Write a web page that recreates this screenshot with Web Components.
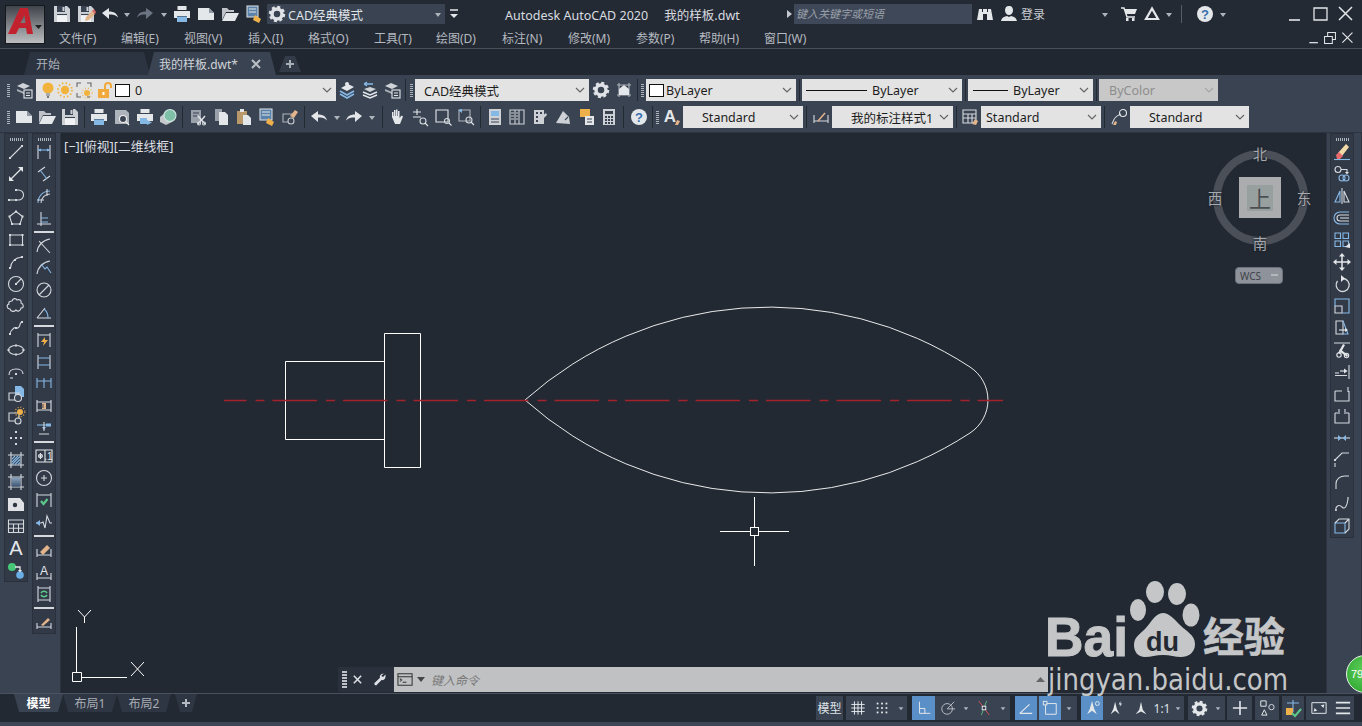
<!DOCTYPE html>
<html lang="zh">
<head>
<meta charset="utf-8">
<title>Autodesk AutoCAD 2020</title>
<style>
html, body { margin: 0; height: 726px; overflow: hidden; background: #232932; }
body { font: 12px "Noto Sans", "Noto Sans CJK SC", sans-serif; color: #d8dce0; }
</style>
</head>
<body>
<cad-app>
  <title-bar></title-bar>
  <doc-tabs></doc-tabs>
  <tool-strip>
    <tool-row>
      <tool-handle></tool-handle>
      <cad-btn n="laystate" w="24"></cad-btn>
      <cad-combo w="300" pad="3">
        <cad-btn n="bulb" w="18"></cad-btn><cad-btn n="sun" w="16"></cad-btn><cad-btn n="freeze" w="22"></cad-btn><cad-btn n="lock" w="20"></cad-btn>
        <color-swatch></color-swatch><cad-label left="5">0</cad-label>
      </cad-combo>
      <cad-btn n="layers" w="22"></cad-btn><cad-btn n="layprev" w="23"></cad-btn><cad-btn n="laystate" w="22"></cad-btn>
      <tool-sep w="4"></tool-sep><tool-handle w="8"></tool-handle>
      <cad-combo w="174" pad="9">CAD经典模式</cad-combo>
      <cad-btn n="gear" w="23"></cad-btn><cad-btn n="vp" w="23"></cad-btn>
      <tool-sep w="4"></tool-sep><tool-handle w="7"></tool-handle>
      <cad-combo w="150" pad="3"><color-swatch></color-swatch><cad-label left="2">ByLayer</cad-label></cad-combo>
      <tool-sep></tool-sep>
      <cad-combo w="160" pad="4"><line-sample w="61"></line-sample><cad-label left="5">ByLayer</cad-label></cad-combo>
      <tool-sep></tool-sep>
      <cad-combo w="125" pad="5"><line-sample w="35"></line-sample><cad-label left="5">ByLayer</cad-label></cad-combo>
      <tool-sep></tool-sep>
      <cad-combo w="119" pad="10" off>ByColor</cad-combo>
    </tool-row>
    <tool-row>
      <tool-handle></tool-handle>
      <cad-btn n="new"></cad-btn><cad-btn n="open"></cad-btn><cad-btn n="save"></cad-btn><tool-sep></tool-sep>
      <cad-btn n="print"></cad-btn><cad-btn n="preview"></cad-btn><cad-btn n="publish"></cad-btn><cad-btn n="globe"></cad-btn><tool-sep w="7"></tool-sep>
      <cad-btn n="cut"></cad-btn><cad-btn n="copyclip"></cad-btn><cad-btn n="paste"></cad-btn><cad-btn n="match"></cad-btn><cad-btn n="brush"></cad-btn><tool-sep></tool-sep>
      <cad-btn n="undo" w="24"></cad-btn><cad-btn n="down" w="12"></cad-btn><cad-btn n="redo" w="22"></cad-btn><cad-btn n="down" w="14"></cad-btn><tool-sep></tool-sep>
      <cad-btn n="hand"></cad-btn><cad-btn n="zoomrt"></cad-btn><cad-btn n="zoomwin"></cad-btn><cad-btn n="zoomprev"></cad-btn><tool-sep></tool-sep>
      <cad-btn n="props"></cad-btn><cad-btn n="design" w="22"></cad-btn><cad-btn n="palette"></cad-btn><cad-btn n="sheet"></cad-btn><cad-btn n="markup"></cad-btn><cad-btn n="calc"></cad-btn><tool-sep w="7"></tool-sep>
      <cad-btn n="help"></cad-btn><tool-sep w="5"></tool-sep><tool-handle w="5"></tool-handle>
      <cad-btn n="textstyle"></cad-btn><cad-combo w="120" pad="19">Standard</cad-combo><tool-sep></tool-sep>
      <cad-btn n="dimstyle"></cad-btn><cad-combo w="121" pad="19">我的标注样式1</cad-combo><tool-sep></tool-sep>
      <cad-btn n="tablestyle" w="22"></cad-btn><cad-combo w="120" pad="5">Standard</cad-combo><tool-sep></tool-sep>
      <cad-btn n="mleader"></cad-btn><cad-combo w="119" pad="19">Standard</cad-combo>
    </tool-row>
  </tool-strip>
  <cad-main>
    <side-dock side="left">
      <side-bar items="line ray pline polygon rect arc circle cloud spline ellipse ellarc insert mkblock point hatch gradient region table mtext addsel"></side-bar>
      <side-bar items="dimlin dimali dimarc dimord | dimrad dimjog dimdia dimang | dimquick dimbase dimcont dimspace dimbreak | tol center inspect jog | dimedit dimtedit dimupd | dimstyleic"></side-bar>
    </side-dock>
    <draw-canvas></draw-canvas>
    <side-dock side="right">
      <side-bar items="erase copy mirror offset array move rotate scale stretch trim extend break breakpt join chamfer fillet blend explode"></side-bar>
    </side-dock>
  </cad-main>
  <bottom-bar></bottom-bar>
</cad-app>
<baidu-mark></baidu-mark>

<script>
const W = '#e4e7ea', G = '#d5d9de', B = '#86b8e6', DK = '#3a4352', Y = '#eeb04a', T = '#e2b48c';
const P = (d, c = W) => `<path d="${d}" fill="${c}" stroke="none"/>`;
const L = (d, c = G, w) => `<path d="${d}" stroke="${c}"${w ? ` stroke-width="${w}"` : ''}/>`;
const D = (...xy) => { let s = ''; for (let i = 0; i < xy.length; i += 2) s += `<rect x="${xy[i] - 1}" y="${xy[i + 1] - 1}" width="2" height="2" fill="${G}" stroke="none"/>`; return s; };
const pencil = P('M8 16l1-4 6-6 3 3-6 6z', T) + P('M15 6l2-2 2 3-1 2z', '#d66');
const floppy = P('M1 1h13l3 3v13H1z', '#cdd1d6') + P('M4 1h8v6H4z', DK) + P('M9.500 2h2v4h-2z', '#cdd1d6') + P('M4 10h10v7H4z', '#f1f2f3') + L('M4 9.500h10', DK);

// icon shapes, drawn on an 18x18 grid
const ICONS = {
  save: floppy,
  saveas: floppy + pencil,
  undo: P('M1 8l7-5v3.500c5 0 8 2 9 6-2-2.500-5-3-9-3V14z'),
  redo: P('M17 8l-7-5v3.500c-5 0-8 2-9 6 2-2.500 5-3 9-3V14z'),
  redodim: P('M17 8l-7-5v3.500c-5 0-8 2-9 6 2-2.500 5-3 9-3V14z', '#6b7483'),
  down: P('M6 8h6l-3 4z', '#aeb4bc'),
  arrowr: P('M6 5l5 4-5 4z', '#c4c8ce'),
  wmin: L('M3 15h11', W, 1.600),
  wmax: L('M3 3h13v12H3z', W, 1.300),
  wclose: L('M3 2l13 13M16 2L3 15', W, 1.500),
  wrest: L('M2 7h10v9H2zM6 7V2h10v9h-4', W, 1.300),
  print: P('M4.500 1h9v4h-9zM1 6h16v7h-3v-2H4v2H1z') + P('M4 11.500h10V17H4z', B),
  new: P('M1 3h11l5 5v7H1z') + P('M12 3l5 5h-5z', '#8f97a3'),
  open: P('M1 3h5l2 2h5v2H5l-4 8z', '#bfc3c9') + P('M5 8h13l-4 8H1z'),
  plot: `<rect x="2" y="1" width="11" height="11" stroke="${G}" fill="#5a82ab"/>` + L('M4 4h7M4 7h7', W) + P('M8 15l2-5 6 4-2 4z', Y),
  gear: `<circle cx="9" cy="9" r="5" stroke="#dfe2e6" stroke-width="3.500" fill="none"/><circle cx="9" cy="9" r="7" stroke="#dfe2e6" stroke-width="2.500" stroke-dasharray="3 2.500" fill="none"/>`,
  more: L('M5 5h8', W, 1.500) + P('M5 9h8l-4 4z'),
  bin: P('M3 4h3v3h1V4h4v3h1V4h3l2 11h-6V9H7v6H1z'),
  user: P('M9 1c3 0 4 2 4 4.500S11 10 9 10 5 8 5 5.500 6 1 9 1zM1 16c1-4 4-4.500 6-5l2 1 2-1c2 .500 5 1 6 5z'),
  cart: L('M1 3h3l3 9h8', W, 1.500) + P('M4.500 4H17l-2 5H6z') + P('M6 13h2.500v3H6zM12 13h2.500v3H12z'),
  tri: L('M9 3.500L3 14h12z', W, 2.200),
  help: `<circle cx="9" cy="9" r="8" fill="${W}" stroke="none"/><text x="9" y="13.500" text-anchor="middle" font-size="13" font-weight="700" fill="#3a6fb0" stroke="none" font-family="Liberation Sans">?</text>`,
  laystate: P('M2 5l6-3 7 3-6 3z', '#cfd3d8') + P('M2 8l7 3 2-1v2l-2 1-7-3z', '#aab0b8') + `<rect x="9" y="9" width="8" height="8" fill="${DK}" stroke="${W}"/>` + L('M11 12h4M11 14.500h4', W),
  bulb: `<circle cx="9" cy="7" r="5.500" fill="#f2b33d" stroke="none"/>` + P('M7 12h4v3H7z', '#aaa') + P('M8 15h2v2H8z', '#777'),
  sun: `<circle cx="9" cy="9" r="4.200" fill="#f2b33d" stroke="none"/><circle cx="9" cy="9" r="7" fill="none" stroke="#f2b33d" stroke-width="1.800" stroke-dasharray="1.500 2.200"/>`,
  freeze: L('M2 6V2h4M12 2h4v4M2 12v4h4', '#666') + L('M12 16h3', '#666') + `<circle cx="12" cy="12" r="3" fill="#f2b33d" stroke="none"/><circle cx="12" cy="12" r="5" fill="none" stroke="#f2b33d" stroke-dasharray="1 2"/>`,
  lock: P('M2 8h11v9H2z', '#f0a93a') + L('M9 8V5a3 3 0 0 1 6 0v2', '#f0a93a', 2) + P('M6.500 11h2v3h-2z', '#fff'),
  layers: P('M3 7l7-4 6 3-7 4z', W) + L('M2 10l7 4 7-4', B, 1.700) + L('M2 13l7 4 7-4', B, 1.700) + `<circle cx="9" cy="3" r="2" fill="${W}" stroke="none"/>`,
  layprev: L('M3 3h9M3 3l3-2M3 3l3 2', B, 1.400) + P('M3 8l6-2 6 2-6 3z', '#cfd3d8') + L('M2 11l7 3 7-3', W, 1.500) + L('M2 14l7 3 7-3', W, 1.500),
  vp: L('M2 4h14M2 14h14M4 2v14M14 2v14', '#aeb4bc') + P('M9 4l5 4v6H4V8z', W),
  preview: P('M2 2h11l3 3v11H2z', '#aeb4bc') + `<circle cx="10" cy="11" r="3.500" fill="${DK}" stroke="#eee"/>` + L('M13 14l3 3', '#eee'),
  publish: P('M4.500 1h9v4h-9zM1 6h16v7H1z') + P('M4 10h7v6H4z', B) + P('M11 12l5 2.500-5 2.500z', B),
  globe: P('M1 9l6-5 6 2v8l-6 3-6-3z', '#c4c8cd') + `<circle cx="11" cy="7.500" r="6" fill="#7fc0a8" stroke="#cfe5e0"/>`,
  cut: P('M2 2h10v13H2z', '#9aa1ab') + L('M4 5h6M4 8h4', DK) + L('M9 8l7 8M16 8l-7 8', W, 1.400) + `<circle cx="10" cy="15.500" r="1.500"/><circle cx="15" cy="15.500" r="1.500"/>`,
  copyclip: P('M3 1h7v12H3z', '#9aa1ab') + P('M7 4h6l3 3v10H7z'),
  paste: P('M2 3h10v13H2z', '#b9986a') + P('M5 1h4v3H5z', W) + P('M8 7h5l3 3v7H8z'),
  match: `<rect x="2" y="1" width="12" height="11" stroke="${G}" fill="#5a82ab"/>` + L('M4 4h8M4 7h8', W) + P('M8 15l2-5 6 4-2 4z', Y),
  brush: L('M2 6h10v8H2z', '#aeb4bc') + `<circle cx="10" cy="13" r="3" fill="${DK}" stroke="#c4c8cd"/>` + P('M9 8l5-6 3 2-4 6z', T),
  hand: P('M4 9V4h1.500v4H6V2h1.500v6H8V1.500h1.500V8h.5V3h1.500v7l2-2.500 1.500 1L12 16H7z'),
  zoomrt: L('M2 4h8M6 1v6M2 9h8', W) + `<circle cx="12" cy="13" r="3"/>` + L('M14 15l3 3', W),
  zoomwin: L('M2 2h12v12H2z', W) + `<circle cx="13" cy="13" r="2.500"/>` + L('M15 15l2.500 2.500', W),
  zoomprev: L('M2 2h11v11H2z', '#aeb4bc') + P('M1 2l4-1v4z', B) + `<circle cx="12" cy="12" r="3"/>` + L('M14 14l3 3', W),
  props: P('M3 1h12v16H3z', '#cdd1d6') + P('M5 3h8v5H5z', B) + L('M5 11h8M5 14h8', DK),
  design: L('M2 2h14v14H2z', '#cdd1d6') + L('M7 2v14M11 2v14', '#cdd1d6') + L('M3 5h3M3 8h3M3 11h3M8 5h2M8 8h2M8 11h2', '#cdd1d6'),
  palette: P('M3 2h10v14H3z', '#cdd1d6') + P('M5 4h2v2H5zM9 4h2v2H9zM5 8h2v2H5zM5 12h2v2H5z', DK) + P('M11 8l4-3 1 2-4 4z', '#cdd1d6'),
  sheet: P('M2 15L9 3l6 6 1 7z', '#cdd1d6') + L('M11 12l3-3', DK),
  markup: P('M3 1h10v8H3z', Y) + P('M8 8h9v9H8z', W) + L('M10 11h5M10 14h5', DK),
  calc: P('M3 1h12v16H3z', '#cdd1d6') + P('M5 3h8v3H5z', DK) + P('M5 8h2v2H5zM8 8h2v2H8zM11 8h2v2h-2zM5 11h2v2H5zM8 11h2v2H8zM11 11h2v2h-2zM5 14h2v2H5zM8 14h2v2H8zM11 14h2v2h-2z', DK),
  textstyle: `<text x="7" y="14" text-anchor="middle" font-size="17" font-weight="700" fill="${W}" stroke="none" font-family="Liberation Sans">A</text>` + P('M12 17l2-5 3 1-2 4z', T),
  dimstyle: L('M2 7v8M16 7v8M2 13h14', G) + L('M6 13l7-8', T, 1.500),
  tablestyle: L('M2 2h13v13H2zM2 6h13M2 10h13M7 6v9M11 6v9', G) + P('M11 16l3-5 3 2-2 4z', T),
  mleader: L('M2 16c2-6 4-8 9-10', G) + `<circle cx="13" cy="5" r="3.500" fill="none" stroke="${W}"/>` + P('M3 17l2-4 2 1-1 3z', T),

  line: L('M3.500 14.500l11-11', G) + D(3, 15, 15, 3),
  ray: L('M4 14L14 4', W, 1.300) + P('M16 2v5l-5-5zM2 16v-5l5 5z'),
  pline: L('M2 13h7', G) + L('M10 3h1.500a5 5 0 0 1 0 10H9', G) + D(2, 13, 9, 13, 9, 3),
  polygon: L('M9 2.500L15.500 7.500 13 15H5L2.500 7.500z', G) + D(9, 2.500, 15.500, 7.500, 13, 15, 5, 15, 2.500, 7.500),
  rect: L('M3 4h12.500v10H3z', G) + D(3, 4, 15.500, 4, 3, 14, 15.500, 14),
  arc: L('M3.500 15c.500-6 4.500-10 11-11', G, 1.200) + D(3, 15, 8, 7, 15, 4),
  circle: `<circle cx="9" cy="9" r="7.500"/>` + L('M9 9l5-5', G) + D(9, 9),
  cloud: L('M5 4c1-3 4-3 5-1 2-1 5 0 4 3 3 1 3 5 0 5 0 3-4 4-5 2-2 2-5 2-6-1-3 0-4-4-1-5-1-2 1-3 3-3z', G),
  spline: L('M3 15c0-3 2-4 4-6s3 2 5-1 0-4 3-5', G) + D(3, 15, 9, 9, 15, 3),
  ellipse: `<ellipse cx="9" cy="9" rx="7.500" ry="4.500"/>` + D(1.500, 9, 16.500, 9, 9, 4.500, 9, 13.500),
  ellarc: L('M2 12c0-4 3-6 7-6s7 2 7 5', G) + L('M3 15h3', G) + D(9, 11),
  insert: P('M8 1h6l3 3v8H8z', B) + L('M2 8h10v7H2z', G) + `<circle cx="11" cy="13" r="3.500" fill="${DK}" stroke="${G}"/>`,
  mkblock: L('M2 6h10v8H2z', G) + `<circle cx="11" cy="14" r="3" fill="${DK}" stroke="${G}"/>` + `<circle cx="13" cy="5" r="3" fill="${Y}" stroke="none"/><circle cx="13" cy="5" r="4.800" fill="none" stroke="${Y}" stroke-dasharray="1 1.800"/>`,
  point: D(9, 3, 4, 9, 14, 9, 9, 15, 9, 9),
  hatch: L('M4 1v16M14 1v16M1 4h16M1 14h16', G) + L('M5 8l3-3M5 11l6-6M5 13.500l8-8M8 13.500l5-5M11 13.500l2-2', B),
  gradient: L('M4 1v16M14 1v16M1 4h16M1 14h16', G) + `<rect x="4.500" y="4.500" width="9" height="9" fill="url(#gr)" stroke="none"/><defs><linearGradient id="gr" x2="0" y2="1"><stop stop-color="#8fa5bd"/><stop offset="1" stop-color="#3c5574"/></linearGradient></defs>`,
  region: P('M1 3h12l4 5v8H1z', '#dfe1e4') + `<circle cx="8" cy="10" r="2.200" fill="#2e3542" stroke="none"/>`,
  table: L('M1.500 3h15v12.500h-15zM1.500 7h15M1.500 11.200h15M6.500 7v8.500M11.500 7v8.500', G),
  mtext: `<text x="9" y="16" text-anchor="middle" font-size="20" fill="${W}" stroke="none" font-family="Liberation Sans">A</text>`,
  addsel: `<circle cx="5" cy="6" r="4" fill="#46c878" stroke="none"/><circle cx="13" cy="14" r="3.800" fill="#6aaee6" stroke="none"/>` + L('M8 6h5v4', W, 1.300) + P('M11 9h4l-2 2.500z'),

  dimlin: L('M3 2v14M15 2v14', G) + L('M3 7h12', B) + P('M3 7l3-1.500v3zM15 7l-3-1.500v3z', B),
  dimali: L('M3 7l7-5M8 16l7-5', G) + L('M5 5l7 9', B),
  dimarc: L('M3 16C3 9 8 4 15 4', B) + L('M6 16C6 11 10 7 15 7', G) + L('M12 2v7M2 13h7', G),
  dimord: L('M2 15h14M6 3v14', G) + L('M6 9h7M6 13h7', B),
  dimrad: L('M2 15C3 8 8 3 15 2', G) + L('M4 4l11 12', G),
  dimjog: L('M2 15C3 8 8 3 15 2', G) + L('M6 5l4 5 2-2 4 6', B),
  dimdia: `<circle cx="9" cy="9" r="7"/>` + L('M4 14L14 4', G),
  dimang: L('M2 15L10 5M2 15h14', G) + L('M9 6c3 2 4 5 4 9', B),
  dimquick: L('M3 2v14M15 2v14M3 4h12', G) + P('M10 6l-4 5h3l-1 4 5-6h-3z', Y),
  dimbase: L('M3 2v14M15 2v14', G) + L('M3 5h12M3 12h12', B),
  dimcont: L('M2 3v10M9 3v10M16 3v10M2 6h14', B),
  dimspace: L('M2 3v12M16 3v12M2 5h14M2 13h14', G) + P('M7 6h4v6H7z', T) + L('M7 8h2M7 10h2', DK),
  dimbreak: L('M2 6h14', B) + P('M7 8h4l-2 3z', B) + L('M9 3v9M4 15h10', G) + L('M11 6h5', B, 3),
  tol: L('M1 3h16v12H1zM10 3v12', W) + L('M5.500 6v6M3 9h5', W) + `<circle cx="5.500" cy="9" r="1.800"/><text x="13.500" y="13" text-anchor="middle" font-size="10" fill="${W}" stroke="none" font-family="Liberation Sans">.1</text>`,
  center: `<circle cx="9" cy="9" r="7.500"/>` + L('M6 9h6M9 6v6', G),
  inspect: L('M2 2v14M16 2v14M2 4h14', G) + L('M6 10l2.500 3 4-5', '#5cc98a', 2.200),
  jog: L('M1 10h5l2-1 2 6 2-12 3 7h2', G) + P('M1 10l4-3v6z', B),
  dimedit: L('M2 8v8M16 8v8M2 14h14', G) + P('M5 11l7-7 3 3-7 7z', T),
  dimtedit: L('M2 10v7M16 10v7M2 15h14', G) + `<text x="9" y="12" text-anchor="middle" font-size="12" fill="${W}" stroke="none" font-family="Liberation Sans">A</text>`,
  dimupd: L('M3 1v16M15 1v16M3 3h12M3 15h12', G) + L('M6 8a3.500 3.500 0 0 1 6 0M12 10a3.500 3.500 0 0 1-6 0', '#5cc98a', 1.600),
  dimstyleic: L('M2 10v6M16 10v6M2 14h14', G) + P('M6 12l7-7 2 2-7 6z', T),

  erase: L('M1 16.500h16', B) + P('M5 10L13 1l3 3-7 9z', '#f2d9a8') + P('M3 12l3-3 4 4-3 3H4z', '#e86a6a'),
  copy: `<circle cx="5" cy="4.500" r="3"/><ellipse cx="9" cy="13" rx="3" ry="3" stroke="${B}"/><ellipse cx="13" cy="13" rx="3" ry="3" stroke="${B}"/>` + L('M8 4.500h6v3', G) + P('M12 7h4l-2 2.500z'),
  mirror: L('M9 1v16', G) + L('M7 4L2 15h5z', B) + L('M11 4l5 11h-5z', G),
  offset: L('M16 3H7a5.500 5.500 0 0 0 0 12h9', B) + L('M16 6H7a2.500 2.500 0 0 0 0 6h9', G) + L('M16 9H7', G),
  array: L('M2 2h5.500v5.500H2zM10 2h5.500v5.500H10zM2 10h5.500v5.500H2zM10 10h5.500v5.500H10z', B) + P('M12 16l5-4v5z'),
  move: L('M9 2v14M2 9h14', W, 1.500) + P('M9 0l3 3.500H6zM9 18l3-3.500H6zM0 9l3.500-3v6zM18 9l-3.500-3v6z'),
  rotate: L('M10 3.500a6.500 6.500 0 1 1-5.500 2.500', G, 1.300) + P('M8 0v7l4-3.500z'),
  scale: L('M2 9h7v7H2z', G) + L('M2 9V2h14v14H9', B),
  stretch: L('M3 2h7v13H3z', G) + L('M10 2l5 13H9', B) + L('M6 11h6', W) + P('M12 9l3 2-3 2z'),
  trim: L('M1 2h16', G, 1) + P('M7 8l8 6-1 2-8-6zM12 4l-5 9-2-1 5-9z') + `<circle cx="6" cy="14" r="2.200" fill="none" stroke="${W}"/><circle cx="13.500" cy="14.500" r="2.200" fill="none" stroke="${W}"/>`,
  extend: L('M16 2v14', G) + L('M2 10h4', G) + L('M7 8h6', W) + P('M11 5.500l3.500 2.500-3.500 2.500z') + L('M2 12.500h12', G, 1),
  break: L('M2 6v10h14V6M2 6h7M15 2v5', G),
  breakpt: L('M2 6v10h14V6M2 6h3M13 6h3M6 2v5M12 2v5', G),
  join: L('M1 9h16', G) + P('M5 6l3.500 3L5 12zM13 6L9.500 9l3.500 3z', B),
  chamfer: L('M2 16v-4M2 9l7-7h7', G) + D(2, 9),
  fillet: L('M3 16v-5C3 6 7 3 12 3h4', G),
  blend: L('M3 16c-1-5 3-7 6-4s5-1 6-8', G) + L('M3 16v-2M15 4v-2', W),
  explode: L('M2 6h10v10H2z', B) + L('M2 6l4-4h10v10l-4 4M12 6l4-4', G),

  s_grid: L('M1.500 5h15M1.500 9h15M1.500 13h15M5 1.500v15M9 1.500v15M13 1.500v15', W),
  s_snap: `<g fill="${W}" stroke="none"><rect x="3" y="3" width="2" height="2"/><rect x="8" y="3" width="2" height="2"/><rect x="13" y="3" width="2" height="2"/><rect x="3" y="8" width="2" height="2"/><rect x="8" y="8" width="2" height="2"/><rect x="13" y="8" width="2" height="2"/><rect x="3" y="13" width="2" height="2"/><rect x="8" y="13" width="2" height="2"/><rect x="13" y="13" width="2" height="2"/></g>`,
  s_ortho: L('M4 2v13h12', W) + L('M4 9.500h6v5.500', W),
  s_polar: `<circle cx="8" cy="10" r="6" stroke="#b5bac2"/>` + L('M8 10l8-8M8 10h9', '#b5bac2'),
  s_osnap: L('M3 1l12 16', '#d05050') + L('M12 1L6 17', '#58b078') + `<rect x="7" y="7" width="4" height="4" fill="${DK}" stroke="${W}"/>`,
  s_iso: L('M2 15h14M2 15L13 5', W, 1.300),
  s_otrack: L('M4 4h12v12H4z', W) + `<rect x="1.500" y="1.500" width="4" height="4" fill="#5a8fc8" stroke="${W}"/>`,
  s_anno: P('M9 1l2.500 9 3 6-5.500-4-5.500 4 3-6z') + `<circle cx="15" cy="4" r="2.200" fill="none" stroke="${W}"/>`,
  s_anno2: P('M8 2l2 8 3 6-5-4-5 4 3-6z') + P('M14 1l-2 4h2l-1 3 3-4h-2z'),
  s_anno3: P('M9 2l2 9 4 5-6-3-6 3 4-5z'),
  s_gear: `<circle cx="9" cy="9" r="5" stroke="#e4e7ea" stroke-width="3.500" fill="none"/><circle cx="9" cy="9" r="7" stroke="#e4e7ea" stroke-width="2.500" stroke-dasharray="3 2.500" fill="none"/>`,
  s_plus: L('M9 1v16M1 9h16', W, 1.800),
  s_shapes: L('M2 1h6v6H2z', W) + `<circle cx="14" cy="8" r="3"/>` + L('M6 11l3 6H3z', W),
  s_clean: L('M9 1v12M3 4h12', B) + P('M2 9h7v7H2z', Y) + L('M8 14l3 3 6-7', '#5cc98a', 2),
  s_full: L('M1 3h16v12H1z', W) + P('M3 13l4-1-3-3zM15 5l-4 1 3 3z', W),
  s_menu: L('M1 3h16M1 9h16M1 15h16', W, 1.800),
  term: L('M1 3h15v12H1zM1 6h15', '#333') + L('M3 8l2 1.500-2 1.500M6 12h4', '#333'),
  wrench: P('M16 2l-3 3-1.500-.500L11 3l3-2c-3-1-6 2-5 5L2 13c-1 1 0 3 2 3l7-7c3 1 6-2 5-7z', '#dfe2e6'),
  close2: L('M3 3l12 12M15 3L3 15', '#dfe2e6', 2.500),
};

class CadIcon extends HTMLElement {
  constructor() {
    super();
    this.attachShadow({ mode: 'open' });
  }
  connectedCallback() {
    const size = this.getAttribute('s') || 18;
    this.shadowRoot.innerHTML = `<style>:host{display:block;width:${size}px;height:${size}px;line-height:0}svg{overflow:visible}</style>
      <svg width="${size}" height="${size}" viewBox="0 0 18 18" fill="none" stroke="${G}" stroke-width="1.100">${ICONS[this.getAttribute('n')] || ''}</svg>`;
  }
}
customElements.define('cad-icon', CadIcon);

class CadBtn extends HTMLElement {
  constructor() {
    super();
    this.attachShadow({ mode: 'open' });
  }
  connectedCallback() {
    const w = this.getAttribute('w') || 23;
    const s = this.getAttribute('s') || 18;
    this.shadowRoot.innerHTML = `<style>:host{display:flex;flex:0 0 ${w}px;width:${w}px;height:22px;align-items:center;justify-content:center}</style>
      <cad-icon n="${this.getAttribute('n')}" s="${s}"></cad-icon>`;
  }
}
customElements.define('cad-btn', CadBtn);

class ToolSep extends HTMLElement {
  constructor() {
    super();
    this.attachShadow({ mode: 'open' });
  }
  connectedCallback() {
    const w = this.getAttribute('w') || 6;
    this.shadowRoot.innerHTML = `<style>:host{display:flex;flex:0 0 ${w}px;height:22px;justify-content:center}i{width:1px;height:100%;background:#232932}</style><i></i>`;
  }
}
customElements.define('tool-sep', ToolSep);

class ToolHandle extends HTMLElement {
  constructor() {
    super();
    this.attachShadow({ mode: 'open' });
  }
  connectedCallback() {
    const w = this.getAttribute('w') || 7;
    this.shadowRoot.innerHTML = `<style>:host{display:flex;flex:0 0 ${w}px;height:22px;align-items:center;justify-content:center}
      i{width:3px;height:13px;background:repeating-linear-gradient(#aeb4bc 0 1px,transparent 1px 2px)}</style><i></i>`;
  }
}
customElements.define('tool-handle', ToolHandle);

class ColorSwatch extends HTMLElement {
  constructor() {
    super();
    this.attachShadow({ mode: 'open' }).innerHTML = `<style>:host{display:block;flex:0 0 13px;width:11px;height:11px;background:#fff;border:1px solid #111}</style>`;
  }
}
customElements.define('color-swatch', ColorSwatch);

class LineSample extends HTMLElement {
  constructor() {
    super();
    this.attachShadow({ mode: 'open' });
  }
  connectedCallback() {
    this.shadowRoot.innerHTML = `<style>:host{display:block;flex:0 0 ${this.getAttribute('w')}px;height:1px;background:#111}</style>`;
  }
}
customElements.define('line-sample', LineSample);

class CadLabel extends HTMLElement {
  constructor() {
    super();
    this.attachShadow({ mode: 'open' });
  }
  connectedCallback() {
    this.shadowRoot.innerHTML = `<style>:host{display:block;margin-left:${this.getAttribute('left') || 0}px}</style><slot></slot>`;
  }
}
customElements.define('cad-label', CadLabel);

class CadCombo extends HTMLElement {
  constructor() {
    super();
    this.attachShadow({ mode: 'open' });
  }
  connectedCallback() {
    const off = this.hasAttribute('off');
    this.shadowRoot.innerHTML = `<style>
      :host{display:flex;flex:0 0 ${this.getAttribute('w')}px;box-sizing:border-box;height:22px;align-items:center;padding-left:${this.getAttribute('pad') || 4}px;
        background:${off ? '#c8c8c8' : '#e3e3e3'};color:${off ? '#8d8d8d' : '#1d1d1d'};font-size:12.500px;position:relative;white-space:nowrap}
      svg{position:absolute;right:4px;top:8px}
    </style><slot></slot><svg width="10" height="7" viewBox="0 0 10 7" fill="none" stroke="${off ? '#a5a5a5' : '#666'}" stroke-width="1.200"><path d="M1 1l4 4 4-4"/></svg>`;
  }
}
customElements.define('cad-combo', CadCombo);

class ToolRow extends HTMLElement {
  constructor() {
    super();
    this.attachShadow({ mode: 'open' }).innerHTML = `<style>:host{display:flex;height:22px;padding-left:5px;align-items:center}</style><slot></slot>`;
  }
}
customElements.define('tool-row', ToolRow);

class ToolStrip extends HTMLElement {
  constructor() {
    super();
    this.attachShadow({ mode: 'open' }).innerHTML = `<style>:host{display:flex;flex-direction:column;gap:5px;box-sizing:border-box;height:58px;padding-top:4px;background:#3a4352;border-bottom:1px solid #2d343f}</style><slot></slot>`;
  }
}
customElements.define('tool-strip', ToolStrip);

class TitleBar extends HTMLElement {
  constructor() {
    super();
    this.attachShadow({ mode: 'open' }).innerHTML = `<style>
      :host{display:grid;grid-template-columns:50px 1fr;grid-template-rows:28px 20px;height:48px;background:#242a33;border-bottom:1px solid #484f5b}
      .logo{grid-row:1/3;margin:5px 0 4px 5px;width:40px;height:39px;background:linear-gradient(#3f444b,#bcbec0);border:1px solid #15181d;box-sizing:border-box;position:relative;overflow:hidden}
      .logo svg{position:absolute;left:0;top:0}
      .row{display:flex;align-items:center}
      .ws{display:flex;align-items:center;flex:0 0 178px;box-sizing:border-box;height:20px;margin-left:1px;background:#3a4352;color:#dfe2e6;font-size:12.500px;position:relative}
      .ws cad-btn{margin-left:1px}
      .title{flex:0 0 280px;margin-left:42px;color:#d8dce0;font-size:12.500px;white-space:pre}
      .search{flex:0 0 178px;box-sizing:border-box;height:20px;background:#3f4858;color:#9aa0aa;font-style:italic;font-size:11px;line-height:20px;padding-left:2px}
      .login{flex:0 0 72px;color:#c8ccd2;font-size:12px;margin-left:1px}
      .sep{width:1px;height:18px;background:#555d6a;margin:0 11px 0 6px}
      .sp{flex:1}
      .menu{height:20px;color:#b4b9c0;font-size:12px}
      .menu span{display:block;white-space:nowrap}
    </style>
    <div class="logo"><svg width="38" height="37" viewBox="0 0 38 37"><path d="M2 28L14 2h8l5 26h-6l-1-6h-7l-3 6zM14.500 17h5l-1-8z" fill="#c2222e"/><path d="M29 19h7l-3.500 4z" fill="#222"/></svg></div>
    <div class="row">
      <cad-btn n="save" w="24"></cad-btn><cad-btn n="saveas" w="24"></cad-btn><cad-btn n="undo" w="24"></cad-btn><cad-btn n="down" w="10"></cad-btn><cad-btn n="redodim" w="26"></cad-btn><cad-btn n="down" w="12"></cad-btn>
      <cad-btn n="print" w="24"></cad-btn><cad-btn n="new" w="24"></cad-btn><cad-btn n="open" w="24"></cad-btn><cad-btn n="plot" w="24"></cad-btn>
      <div class="ws"><cad-btn n="gear" w="18"></cad-btn><span style="margin-left:2px">CAD经典模式</span><cad-btn n="down" w="14" style="position:absolute;right:0;top:-1px"></cad-btn></div>
      <cad-btn n="more" w="18"></cad-btn>
      <div class="title">Autodesk AutoCAD 2020     我的样板.dwt</div>
      <cad-btn n="arrowr" w="9"></cad-btn>
      <div class="search">键入关键字或短语</div>
      <cad-btn n="bin" w="26"></cad-btn><cad-btn n="user" w="22"></cad-btn>
      <div class="login">登录</div>
      <cad-btn n="down" w="24"></cad-btn><cad-btn n="cart" w="24"></cad-btn><cad-btn n="tri" w="22"></cad-btn><cad-btn n="down" w="12"></cad-btn>
      <div class="sep"></div>
      <cad-btn n="help" w="24"></cad-btn><cad-btn n="down" w="12"></cad-btn>
      <div class="sp"></div>
      <cad-btn n="wmin" w="24"></cad-btn><cad-btn n="wmax" w="26"></cad-btn><cad-btn n="wclose" w="24"></cad-btn><div style="width:5px"></div>
    </div>
    <div class="row menu">
      <span style="margin-left:9px;flex:0 0 62px">文件(F)</span><span style="flex:0 0 63px">编辑(E)</span><span style="flex:0 0 64px">视图(V)</span><span style="flex:0 0 60px">插入(I)</span><span style="flex:0 0 66px">格式(O)</span><span style="flex:0 0 62px">工具(T)</span><span style="flex:0 0 66px">绘图(D)</span><span style="flex:0 0 66px">标注(N)</span><span style="flex:0 0 68px">修改(M)</span><span style="flex:0 0 63px">参数(P)</span><span style="flex:0 0 65px">帮助(H)</span><span>窗口(W)</span>
      <div class="sp"></div>
      <cad-btn n="wmin" w="16" s="14"></cad-btn><cad-btn n="wrest" w="16" s="14"></cad-btn><cad-btn n="wclose" w="18" s="14"></cad-btn><div style="width:6px"></div>
    </div>`;
  }
}
customElements.define('title-bar', TitleBar);

class DocTabs extends HTMLElement {
  constructor() {
    super();
    this.attachShadow({ mode: 'open' }).innerHTML = `<style>
      :host{display:flex;align-items:flex-end;height:26px;padding-left:24px;background:#212730;box-sizing:border-box}
      div{height:23px;display:flex;align-items:center;box-sizing:border-box;clip-path:polygon(6px 0,calc(100% - 6px) 0,100% 100%,0 100%)}
      .a{width:126px;padding-left:12px;background:#2d3441;color:#aab0b8;font-size:12px}
      .b{width:128px;padding-left:11px;background:#3a4352;color:#cfd3d8;font-size:12px;margin-left:-2px}
      .b svg{margin-left:13px}
      .c{width:22px;margin-left:3px;height:16px;margin-bottom:3px;justify-content:center;background:#333b48}
    </style>
    <div class="a">开始</div>
    <div class="b">我的样板.dwt*<svg width="10" height="10" viewBox="0 0 10 10"><path d="M1 1l8 8M9 1L1 9" stroke="#b9bec5" stroke-width="2"/></svg></div>
    <div class="c"><svg width="10" height="10" viewBox="0 0 10 10"><path d="M5 1v8M1 5h8" stroke="#a8aeb6" stroke-width="2"/></svg></div>`;
  }
}
customElements.define('doc-tabs', DocTabs);

class SideBar extends HTMLElement {
  constructor() {
    super();
    this.attachShadow({ mode: 'open' });
  }
  connectedCallback() {
    const cells = this.getAttribute('items').split(' ').map(n => n === '|'
      ? '<i></i>'
      : `<cad-icon n="${n}" style="margin:2px 0"></cad-icon>`).join('');
    this.shadowRoot.innerHTML = `<style>
      :host{display:flex;flex-direction:column;align-items:center;width:22px;padding:2px 0 0;background:#323a48;border:1px solid #2a313c;box-sizing:content-box;align-self:flex-start}
      b{display:block;flex:none;width:13px;height:3px;margin:2px 0 0;background:repeating-linear-gradient(90deg,#aeb4bc 0 1px,transparent 1px 2px)}
      i{display:block;flex:none;width:20px;height:2px;background:#d5d9de;margin:2px 0}
    </style><b></b>${cells}`;
  }
}
customElements.define('side-bar', SideBar);

class SideDock extends HTMLElement {
  constructor() {
    super();
    this.attachShadow({ mode: 'open' });
  }
  connectedCallback() {
    const left = this.getAttribute('side') === 'left';
    this.shadowRoot.innerHTML = `<style>
      :host{display:flex;flex:0 0 ${left ? 56 : 31}px;gap:4px;background:#3a4352;padding:0 0 0 ${left ? 4 : 3}px;border-left:${left ? '0' : '1px solid #2d343f'};border-right:1px solid #2d343f}
    </style><slot></slot>`;
  }
}
customElements.define('side-dock', SideDock);

class ViewCube extends HTMLElement {
  constructor() {
    super();
    this.attachShadow({ mode: 'open' }).innerHTML = `<style>
      :host{position:absolute;left:1151px;top:16px;width:100px;height:136px}
      .ring{position:absolute;left:1px;top:1px;width:95px;height:95px;box-sizing:border-box;border:8px solid #4a4f58;border-radius:50%}
      .cube{position:absolute;left:27px;top:28px;width:42px;height:41px;background:#aaacae;display:flex;align-items:center;justify-content:center}
      .cube span{width:26px;height:26px;background:#98a09f;color:#4b4f52;font-size:22px;line-height:26px;text-align:center}
      .n{position:absolute;color:#a6a9ad;font-size:14.500px;line-height:16px;width:18px;text-align:center;text-shadow:0 0 2px #232932,0 0 2px #232932}
      .wcs{position:absolute;left:23px;top:118px;width:48px;height:17px;border-radius:4px;background:#8e929a;color:#3f434b;font-size:10px;line-height:16px;padding-left:4px;box-sizing:border-box;border:1px solid #6d7179}
      .wcs i{position:absolute;right:4px;top:6px;width:7px;height:2px;background:#b3b6bb}
    </style>
    <div class="ring"></div>
    <div class="cube"><span>上</span></div>
    <div class="n" style="left:39px;top:-3px">北</div>
    <div class="n" style="left:39px;top:86px">南</div>
    <div class="n" style="left:-6px;top:41px">西</div>
    <div class="n" style="left:83px;top:41px">东</div>
    <div class="wcs">WCS<i></i></div>`;
  }
}
customElements.define('view-cube', ViewCube);

class CommandLine extends HTMLElement {
  constructor() {
    super();
    this.attachShadow({ mode: 'open' }).innerHTML = `<style>
      :host{position:absolute;left:277px;top:534px;width:710px;height:25px;display:flex;align-items:center;background:#2b313c}
      .h{width:5px;height:17px;margin-left:4px;background:repeating-linear-gradient(#bfc3c9 0 2px,transparent 2px 3px)}
      .x{margin:0 1px 0 2px}
      .box{flex:1;height:25px;background:#bfc1c3;display:flex;align-items:center;padding-left:3px;color:#777;font-style:italic;font-size:12px;position:relative}
      .box span{margin-left:6px}
      .box svg{position:absolute;right:3px;top:10px}
    </style>
    <div class="h"></div><cad-btn class="x" n="close2" w="16" s="11"></cad-btn><cad-btn n="wrench" w="28" s="14"></cad-btn>
    <div class="box"><cad-icon n="term" s="17"></cad-icon><svg style="position:static;margin-left:3px" width="8" height="5" viewBox="0 0 8 5"><path d="M0 0h8L4 5z" fill="#444"/></svg><span>键入命令</span>
      <svg width="9" height="5" viewBox="0 0 9 5"><path d="M0 5h9L4.500 0z" fill="#666"/></svg></div>`;
  }
}
customElements.define('command-line', CommandLine);

class DrawCanvas extends HTMLElement {
  constructor() {
    super();
    this.attachShadow({ mode: 'open' }).innerHTML = `<style>
      :host{display:block;flex:1;position:relative;background:#232932;overflow:hidden}
      svg{position:absolute;left:0;top:0}
      .v{position:absolute;left:3px;top:5px;color:#dcdfe3;font-size:12.800px;line-height:16px}
    </style>
    <svg width="1265" height="560" viewBox="61 133 1265 560" fill="none" stroke="#fff">
      <path d="M285.500 361.500h99v78h-99zM384.500 333.500h36v134h-36z" stroke-width="1"/>
      <path d="M525 400A367 367 0 0 1 970 367A39.300 39.300 0 0 1 970 433A367 367 0 0 1 525 400z" stroke-width=".9"/>
      <path d="M224 400.500H1003" stroke="#a3222b" stroke-width="1.500" stroke-dasharray="22.500 9 9 8 44.500 9 9 8 44.500 9 9 8 44.500 9 9 8 44.500 9 9 8 44.500 9 9 8 44.500 9 9 8 44.500 9 9 8 44.500 9 9 8 44.500 9 9 8 44.500 9 9 8 44.500 9 9 8"/>
      <path d="M754.500 497v30M754.500 536v30M720 531.500h30M759 531.500h30" stroke-width="1"/>
      <rect x="750.500" y="527.500" width="8" height="8" stroke-width="1"/>
      <path d="M76.500 627v45M81.500 677.500H127M72.500 672.500h9v9h-9zM78 610l6.500 7 6.500-7M84.500 617v6M131 662l13 14M144 662l-13 14" stroke-width="1"/>
    </svg>
    <div class="v">[−][俯视][二维线框]</div>
    <view-cube></view-cube>
    <command-line></command-line>`;
  }
}
customElements.define('draw-canvas', DrawCanvas);

class CadMain extends HTMLElement {
  constructor() {
    super();
    this.attachShadow({ mode: 'open' }).innerHTML = `<style>:host{display:flex;height:560px}</style><slot></slot>`;
  }
}
customElements.define('cad-main', CadMain);

class StatBtn extends HTMLElement {
  constructor() {
    super();
    this.attachShadow({ mode: 'open' });
  }
  connectedCallback() {
    const on = this.hasAttribute('on');
    const icon = this.getAttribute('n');
    const w = this.getAttribute('w') || 23;
    this.shadowRoot.innerHTML = `<style>
      :host{display:flex;flex:0 0 ${w}px;width:${w}px;height:24px;align-items:center;justify-content:center;background:${on ? '#5a8fc8' : 'transparent'};color:#dfe2e6;font-size:12px}
    </style>${icon ? `<cad-icon n="${icon}" s="${this.getAttribute('s') || 16}"></cad-icon>` : '<slot></slot>'}`;
  }
}
customElements.define('stat-btn', StatBtn);

class StatGroup extends HTMLElement {
  constructor() {
    super();
    this.attachShadow({ mode: 'open' });
  }
  connectedCallback() {
    this.shadowRoot.innerHTML = `<style>:host{display:flex;flex:0 0 auto;height:24px;background:#3a4352;margin-left:${this.getAttribute('gap') || 3}px}</style><slot></slot>`;
  }
}
customElements.define('stat-group', StatGroup);

class BottomBar extends HTMLElement {
  constructor() {
    super();
    this.attachShadow({ mode: 'open' }).innerHTML = `<style>
      :host{display:flex;height:33px;box-sizing:border-box;background:#232932;border-top:1px solid #4a5260;border-bottom:4px solid #3d4655;padding-top:2px}
      .tabs{display:flex;align-items:flex-start;padding-left:14px;flex:0 0 802px;box-sizing:border-box}
      .t{height:18px;margin-top:-2px;display:flex;align-items:center;justify-content:center;background:#2f3643;color:#a8adb5;font-size:12px;clip-path:polygon(0 0,100% 0,calc(100% - 5px) 100%,5px 100%);width:54px;margin-right:0}
      .on{background:#3a4352;color:#fff;font-weight:700;width:49px}
      .plus{width:22px;margin-left:4px}
    </style>
    <div class="tabs"><div class="t on">模型</div><div class="t">布局1</div><div class="t">布局2</div><div class="t plus"><svg width="10" height="10" viewBox="0 0 10 10"><path d="M5 1v8M1 5h8" stroke="#b5bac2" stroke-width="2"/></svg></div></div>
    <stat-group gap="14"><stat-btn w="27">模型</stat-btn></stat-group>
    <stat-group><stat-btn n="s_grid" w="23"></stat-btn><stat-btn n="s_snap" w="25"></stat-btn><stat-btn n="down" w="13" s="14"></stat-btn></stat-group>
    <stat-group gap="5"><stat-btn n="s_ortho" on w="23"></stat-btn><stat-btn n="s_polar" w="26"></stat-btn><stat-btn n="down" w="10" s="14"></stat-btn><stat-btn n="s_osnap" w="25"></stat-btn><stat-btn n="down" w="14" s="14"></stat-btn></stat-group>
    <stat-group gap="5"><stat-btn n="s_iso" on w="22"></stat-btn><stat-btn n="s_otrack" on w="22" style="margin-left:2px"></stat-btn><stat-btn n="down" w="16" s="14"></stat-btn></stat-group>
    <stat-group gap="4"><stat-btn n="s_anno" on w="22"></stat-btn><stat-btn n="s_anno2" w="26"></stat-btn><stat-btn n="s_anno3" w="23"></stat-btn><stat-btn w="20">1:1</stat-btn><stat-btn n="down" w="12" s="14"></stat-btn></stat-group>
    <stat-group gap="4"><stat-btn n="s_gear" w="23" s="17"></stat-btn><stat-btn n="down" w="14" s="14"></stat-btn></stat-group>
    <stat-group gap="2"><stat-btn n="s_plus" w="25"></stat-btn></stat-group>
    <stat-group gap="3"><stat-btn n="s_shapes" w="24"></stat-btn></stat-group>
    <stat-group gap="3"><stat-btn n="s_clean" w="22" s="18"></stat-btn></stat-group>
    <stat-group gap="2"><stat-btn n="s_full" w="26"></stat-btn><stat-btn n="s_menu" w="22"></stat-btn></stat-group>`;
  }
}
customElements.define('bottom-bar', BottomBar);

class BaiduMark extends HTMLElement {
  constructor() {
    super();
    this.attachShadow({ mode: 'open' }).innerHTML = `<style>
      :host{position:absolute;left:0;top:0;width:1362px;height:726px;pointer-events:none;overflow:hidden}
      svg{position:absolute;left:0;top:0}
      text{fill:#c4c6c8}
      .bai{font:700 56px "Liberation Sans",sans-serif;stroke:#c4c6c8;stroke-width:1}
      .du{font:700 27px "Liberation Sans",sans-serif;fill:#232932}
      .jy{font:700 41px "Noto Sans CJK SC",sans-serif;stroke:#c4c6c8;stroke-width:.6}
      .url{font:30px "DejaVu Sans",sans-serif}
      .g{position:absolute;left:1346px;top:655px;width:38px;height:38px;box-sizing:border-box;border-radius:50%;border:1px solid #e8f5e8;background:radial-gradient(circle at 50% 40%,#5fd15a,#2aa12c);color:#fff;font:11px "Liberation Sans",sans-serif;line-height:36px;padding-left:4px}
    </style>
    <svg width="1362" height="726" viewBox="0 0 1362 726">
      <text class="bai" x="1045" y="656" textLength="83" lengthAdjust="spacingAndGlyphs">Bai</text>
      <g fill="#c4c6c8">
        <ellipse cx="1155" cy="592" rx="9" ry="11"/><ellipse cx="1177" cy="594" rx="9" ry="11"/>
        <ellipse cx="1138" cy="610" rx="8" ry="11"/><ellipse cx="1191" cy="615" rx="8.500" ry="11.500"/>
        <path d="M1163 613c6 0 11 6 17 12s15 10 15 19-7 13-14 13c-6 0-11-2-18-2s-12 2-18 2c-7 0-11-5-11-12 0-8 6-11 11-16 6-6 10-16 18-16z"/>
      </g>
      <text class="du" x="1146" y="651">du</text>
      <text class="jy" x="1203" y="652">经验</text>
      <text class="url" x="1048" y="690" textLength="240" lengthAdjust="spacingAndGlyphs">jingyan.baidu.com</text>
    </svg>
    <div class="g">79</div>`;
  }
}
customElements.define('baidu-mark', BaiduMark);

class CadApp extends HTMLElement {
  constructor() {
    super();
    this.attachShadow({ mode: 'open' }).innerHTML = `<style>:host{display:flex;flex-direction:column;width:1362px;height:726px}</style><slot></slot>`;
  }
}
customElements.define('cad-app', CadApp);
</script>
</body>
</html>
